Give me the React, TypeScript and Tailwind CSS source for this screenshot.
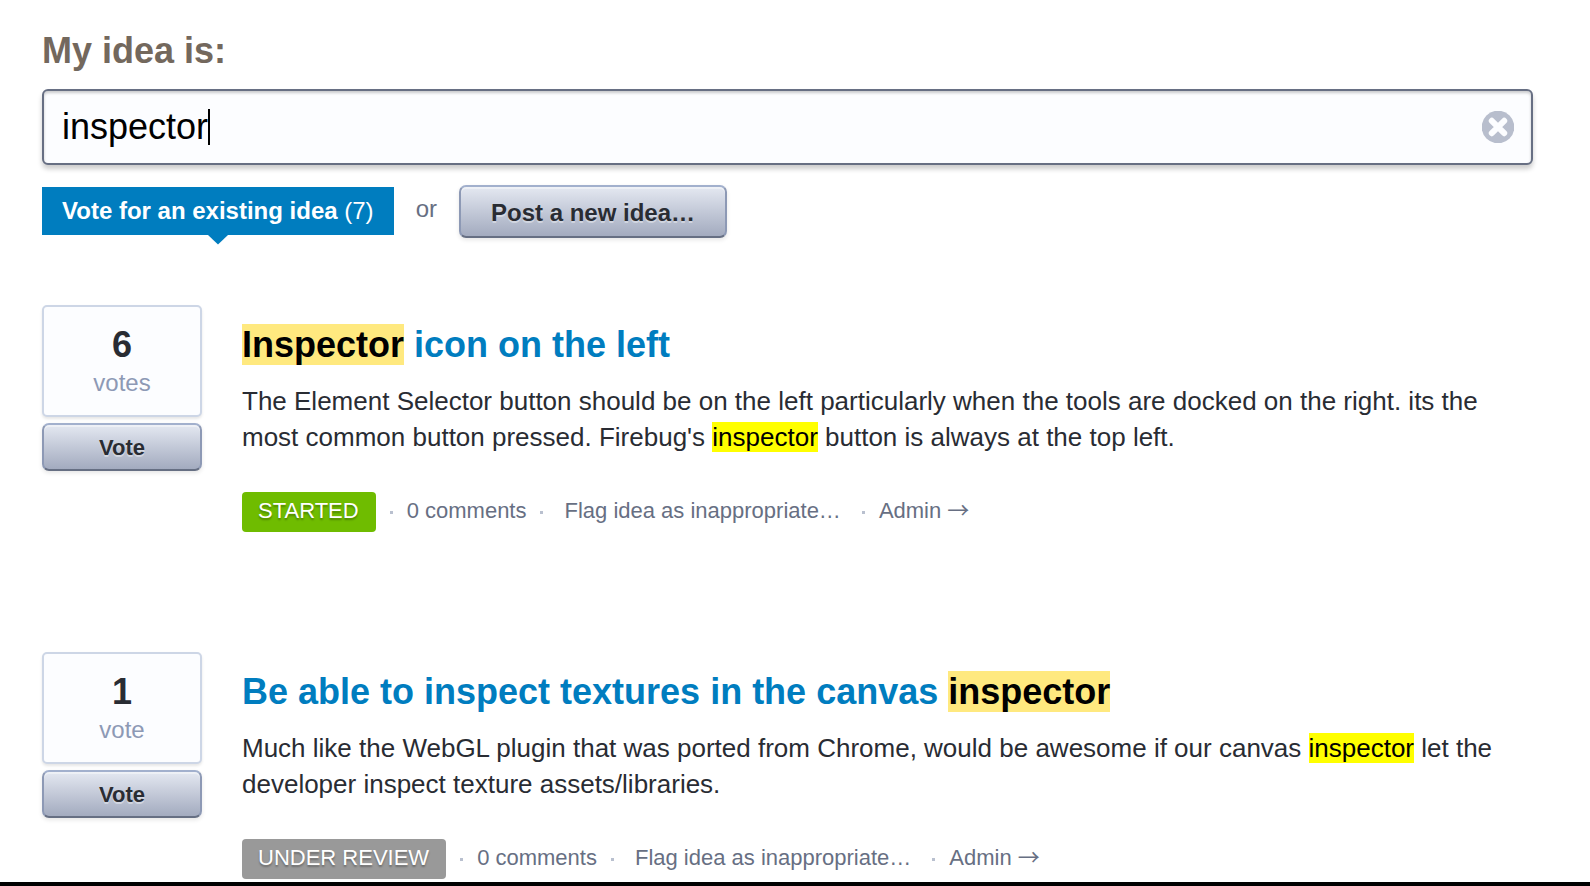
import { useState } from "react";
import type { ReactNode } from "react";

type Idea = {
  id: number;
  votes: number;
  title: ReactNode;
  body: ReactNode;
  status: string;
  statusClass: string;
};

function TitleMark({ children }: { children: ReactNode }) {
  return <mark className="bg-[#ffe97f] text-black">{children}</mark>;
}

function BodyMark({ children }: { children: ReactNode }) {
  return <mark className="bg-[#ffff00] text-black">{children}</mark>;
}

const ideas: Idea[] = [
  {
    id: 1,
    votes: 6,
    title: (
      <>
        <TitleMark>Inspector</TitleMark> icon on the left
      </>
    ),
    body: (
      <>
        The Element Selector button should be on the left particularly when the tools are docked on
        the right. its the most common button pressed. Firebug's <BodyMark>inspector</BodyMark>{" "}
        button is always at the top left.
      </>
    ),
    status: "STARTED",
    statusClass: "bg-[#6fbc00]",
  },
  {
    id: 2,
    votes: 1,
    title: (
      <>
        Be able to inspect textures in the canvas <TitleMark>inspector</TitleMark>
      </>
    ),
    body: (
      <>
        Much like the WebGL plugin that was ported from Chrome, would be awesome if our canvas{" "}
        <BodyMark>inspector</BodyMark> let the developer inspect texture assets/libraries.
      </>
    ),
    status: "UNDER REVIEW",
    statusClass: "bg-[#999999]",
  },
];

const buttonClass =
  "rounded-[7px] border-2 border-[#8d99b5] border-t-[#a2b0cd] border-b-[#666f83] bg-linear-to-b from-[#e4e8f1] to-[#a3abbf] font-bold text-[#292c33] shadow-[0_2px_4px_rgba(0,0,0,0.1),inset_0_2px_0_rgba(255,255,255,0.4)] [text-shadow:0_2px_0_rgba(255,255,255,0.4)]";

function Dot() {
  return <span className="size-[3px] bg-[#b9c0cf]" aria-hidden="true" />;
}

function IdeaRow({ idea }: { idea: Idea }) {
  return (
    <li className="flex items-start gap-10">
      <div className="flex w-40 shrink-0 flex-col gap-1.5">
        <div className="flex h-28 flex-col items-center rounded-[5px] border-2 border-[#cdd6e6] bg-[#fcfdff] pt-[17px] shadow-[0_2px_3px_rgba(0,0,0,0.1)]">
          <strong className="text-[36px] leading-[42px] text-[#292c33]">{idea.votes}</strong>
          <span className="text-[24px] leading-[34px] text-[#8d99b5]">
            {idea.votes === 1 ? "vote" : "votes"}
          </span>
        </div>
        <button type="button" className={`h-12 text-[22px] ${buttonClass}`}>
          Vote
        </button>
      </div>
      <article className="min-w-0 flex-1 pt-[18px]">
        <h2 className="text-[36px] leading-[44px] font-bold">
          <a href="#idea" className="text-[#007dbf]">
            {idea.title}
          </a>
        </h2>
        <p className="mt-4 text-[26px] leading-9 text-[#292c33]">{idea.body}</p>
        <div className="mt-[37px] flex items-center text-[22px] leading-[38px] text-[#676f83]">
          <span
            className={`rounded-[4px] pr-[17px] pb-0.5 pl-4 text-white [text-shadow:0_2px_2px_rgba(0,0,0,0.3)] ${idea.statusClass}`}
          >
            {idea.status}
          </span>
          <span className="flex items-center gap-3.5 pl-3.5">
            <Dot />
            <a href="#comments" className="pb-0.5">
              0 comments
            </a>
            <Dot />
          </span>
          <a href="#flag" className="px-[21px] pb-0.5">
            Flag idea as inappropriate…
          </a>
          <Dot />
          <a href="#admin" className="pb-0.5 pl-3.5">
            Admin <span className="font-['Noto_Sans_CJK_JP',sans-serif] leading-none">→</span>
          </a>
        </div>
      </article>
    </li>
  );
}

export default function App() {
  const [query, setQuery] = useState("inspector");

  return (
    <div className="flex min-h-screen flex-col bg-white font-['Liberation_Sans',Arial,sans-serif]">
      <main className="pt-[29px] pr-[57px] pb-[3px] pl-[42px]">
        <label htmlFor="idea" className="block text-[36px] leading-[44px] font-bold text-[#73685d]">
          My idea is:
        </label>

        <div className="relative mt-4">
          <input
            id="idea"
            type="text"
            value={query}
            onChange={(e) => setQuery(e.target.value)}
            className="block h-[76px] w-full rounded-[6px] border-2 border-[#676f83] bg-[#fcfdff] pr-20 pl-[18px] text-[36px] text-black caret-transparent shadow-[0_4px_5px_rgba(0,0,0,0.2),inset_0_2px_3px_rgba(0,0,0,0.2)] outline-none"
          />
          {query === "inspector" && (
            <span className="absolute top-5 left-[166px] h-9 w-0.5 bg-black" aria-hidden="true" />
          )}
          <button
            type="button"
            aria-label="Clear"
            onClick={() => setQuery("")}
            className="absolute top-[22px] right-[19px] size-8"
          >
            <svg viewBox="0 0 32 32" className="size-8">
              <circle cx="16" cy="16" r="16.3" fill="#b8becd" />
              <path
                d="M9.8 9.8 22.2 22.2M22.2 9.8 9.8 22.2"
                stroke="#fcfdff"
                strokeWidth="6"
                strokeLinecap="round"
              />
            </svg>
          </button>
        </div>

        <div className="mt-5 flex items-start">
          <button
            type="button"
            className="relative mt-0.5 h-12 bg-[#007dbf] px-5 text-[24px] font-bold text-white"
          >
            Vote for an existing idea <span className="font-normal">(7)</span>
            <svg
              viewBox="0 0 20 10"
              className="absolute top-full left-1/2 h-2.5 w-5 -translate-x-1/2"
              aria-hidden="true"
            >
              <path d="M0 0H20L10 9.5Z" fill="#007dbf" />
            </svg>
          </button>
          <span className="px-[22px] pt-2.5 text-[24px] leading-7 text-[#676f83]">or</span>
          <button type="button" className={`h-[53px] px-[30px] pt-0.5 text-[24px] ${buttonClass}`}>
            Post a new idea…
          </button>
        </div>

        <ul className="mt-[67px] flex flex-col gap-[120px]">
          {ideas.map((idea) => (
            <IdeaRow key={idea.id} idea={idea} />
          ))}
        </ul>
      </main>
      <div className="mt-auto h-1 bg-black" />
    </div>
  );
}
